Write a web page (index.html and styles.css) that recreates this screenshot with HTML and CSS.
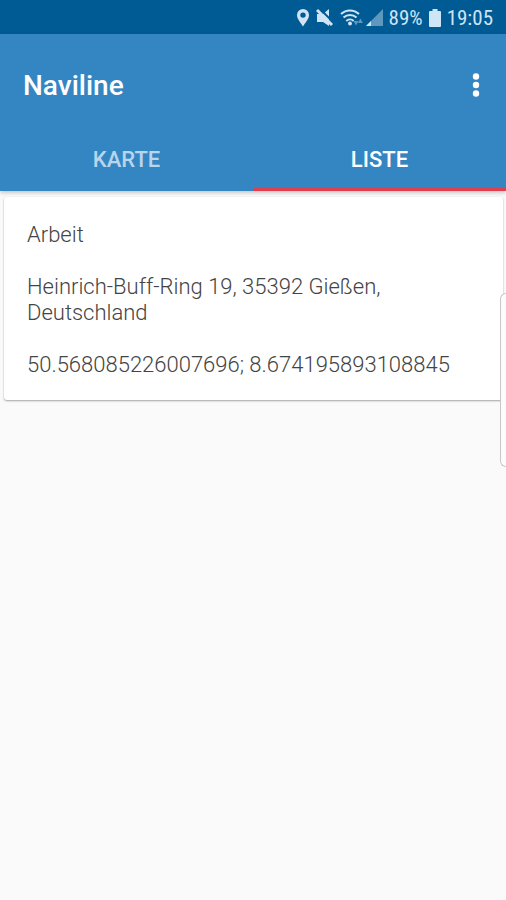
FILE: index.html
```html
<!DOCTYPE html>
<html lang="de">
<head>
<meta charset="utf-8">
<meta name="viewport" content="width=device-width, initial-scale=1">
<title>Naviline</title>
<link rel="stylesheet" href="styles.css">
</head>
<body>
<div class="status">
  <svg class="pin" width="14" height="18" viewBox="0 0 14 18" aria-hidden="true"><path fill-rule="evenodd" d="M7 0a6 6 0 0 0-6 6.200C1 10 5 14 7 17.500 9 14 13 10 13 6.200A6 6 0 0 0 7 0zM7 3.400a2.700 2.700 0 1 1 0 5.400 2.700 2.700 0 0 1 0-5.400z"/></svg>
  <svg class="mute" width="18" height="18" viewBox="0 0 18 18" aria-hidden="true"><path d="M1 5h6L13 0v17L7 13H1z"/><path class="slash" d="M3-1l15 15"/><path class="stroke" d="M1 1l15 15"/></svg>
  <svg class="wifi" width="24" height="18" viewBox="0 0 24 18" aria-hidden="true"><path class="arc" d="M1 5a13 13 0 0 1 18 0M3.500 8.600a9.500 9.500 0 0 1 13 0M6.300 12a5.500 5.500 0 0 1 7.400 0"/><circle cx="10" cy="14.500" r="2"/><path class="dim" d="M13.500 12h5L16 16.500zM18 14l2.300-4.500 2.700 4.500z"/></svg>
  <svg class="signal" width="18" height="18" viewBox="0 0 18 18" aria-hidden="true"><path class="dim" d="M17 0v17H0z"/><path d="M5 12v5H0z"/></svg>
  <span class="percent">89%</span>
  <svg class="battery" width="12" height="18" viewBox="0 0 12 18" aria-hidden="true"><path d="M3.500 0h5v2H11q1 0 1 1v14q0 1-1 1H1q-1 0-1-1V3q0-1 1-1h2.500z"/></svg>
  <time>19:05</time>
</div>
<header class="appbar">
  <div class="toolbar">
    <h1>Naviline</h1>
    <button class="more" type="button" aria-label="Weitere Optionen">
      <svg width="8" height="24" viewBox="0 0 8 24" aria-hidden="true"><circle cx="4" cy="3.500" r="3.200"/><circle cx="4" cy="12" r="3.200"/><circle cx="4" cy="20.500" r="3.200"/></svg>
    </button>
  </div>
  <div class="tabs" role="tablist">
    <button class="tab" type="button" role="tab" aria-selected="false">KARTE</button>
    <button class="tab" type="button" role="tab" aria-selected="true">LISTE</button>
  </div>
</header>
<main>
  <article class="card">
    <p>Arbeit</p>
    <p>Heinrich-Buff-Ring 19, 35392 Gießen, Deutschland</p>
    <p>50.568085226007696; 8.674195893108845</p>
  </article>
</main>
<div class="edge-handle"></div>
</body>
</html>
```
FILE: styles.css
```css
* { box-sizing: border-box; }

body {
  margin: 0;
  min-height: 100vh;
  background: #fafafa;
  color: #444;
  font-family: Roboto, "Liberation Sans", sans-serif;
  overflow-x: hidden;
}

.status {
  display: flex;
  align-items: center;
  justify-content: flex-end;
  gap: 6px;
  height: 34px;
  padding: 1px 13px 0 0;
  background: #005a94;
  color: #cfe4f4;
  font-family: "Roboto Condensed", Roboto, sans-serif;
  font-size: 21px;
}

.status svg { fill: #cfe4f4; flex: none; }
.status .slash { stroke: #005a94; stroke-width: 2; }
.status .stroke { stroke: #cfe4f4; stroke-width: 3; }
.status .arc { fill: none; stroke: #cfe4f4; stroke-width: 2; }
.status .dim { fill: #5e98bf; }
.wifi { margin-right: -4px; }
.percent { margin-left: -1px; }

.appbar {
  position: relative;
  background: #3486c3;
  color: #fff;
  box-shadow: 0 2px 4px rgba(0, 0, 0, 0.2);
}

.toolbar {
  display: flex;
  align-items: center;
  justify-content: space-between;
  height: 84px;
  padding: 19px 14px 0 23px;
}

h1 {
  margin: 0;
  font-size: 28px;
  line-height: 32px;
  font-weight: 500;
}

button {
  border: 0;
  background: none;
  color: inherit;
  font: inherit;
}

.more {
  display: flex;
  justify-content: center;
  width: 32px;
  padding: 3px 0 5px;
}

.more svg { fill: #fff; }

.tabs {
  display: grid;
  grid-template-columns: 1fr 1fr;
}

.tab {
  height: 73px;
  padding: 12px 0 0;
  border-bottom: 3px solid transparent;
  color: #b7d5eb;
  font-size: 22px;
  font-weight: 500;
}

.tab[aria-selected="true"] {
  border-color: #df404f;
  color: #fff;
}

main { padding: 6px 3px 0 4px; }

.card {
  display: grid;
  gap: 26px;
  padding: 25px 23px 22px;
  border-radius: 3px;
  background: #fff;
  box-shadow: 0 1px 2px rgba(0, 0, 0, 0.35);
  font-size: 22px;
  font-weight: 300;
  line-height: 26px;
}

.card p { margin: 0; }

.edge-handle {
  position: absolute;
  top: 293px;
  right: 0;
  width: 6px;
  height: 174px;
  border: 1px solid #c8c8c8;
  border-right: 0;
  border-radius: 6px 0 0 6px;
  background: #fcfcfc;
}
```
